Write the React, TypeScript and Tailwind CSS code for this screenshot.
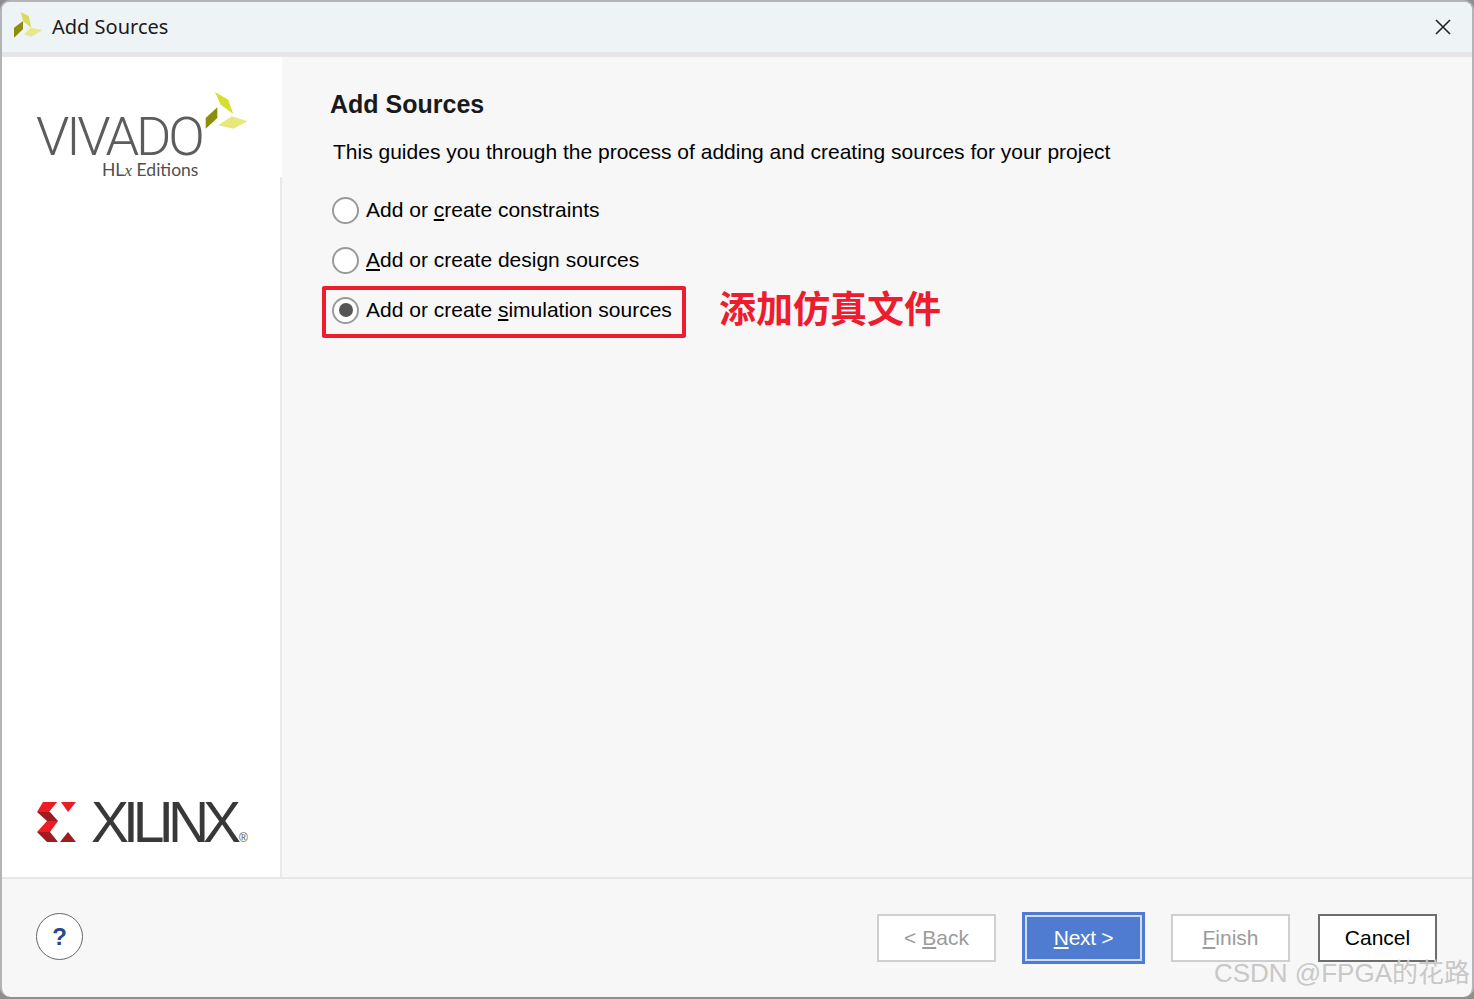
export default function App() {
  const sans = { fontFamily: '"Liberation Sans", Arial, sans-serif' };
  return (
    <div className="h-[999px] w-[1474px] overflow-hidden bg-[#8f8f8f] font-['Liberation_Sans',sans-serif]" >
      <div className="relative flex h-[997px] w-[1474px] flex-col overflow-hidden rounded-[10px] border-2 border-b-0 border-[#b4b4b4] bg-[#f7f7f7] text-black">
        {/* Title bar */}
        <div className="flex h-[50px] shrink-0 items-center bg-[#eef3f6]">
          <svg width="30" height="32" viewBox="0 0 30 32" className="ml-[12px]">
            <polygon points="6.7,1 14.7,5 17.3,16.7 9,10" fill="#d9dc5a" />
            <polygon points="9,10 9,18.3 0,26.7 0,16.7" fill="#8c8f0c" />
            <polygon points="10,23.3 16.7,16.7 28.3,19 17.3,25.7" fill="#e6e88c" />
          </svg>
          <span className="ml-[8px] text-[20px] font-['Noto_Sans','Liberation_Sans',sans-serif] text-[#1a1a1a]">Add Sources</span>
          <svg width="18" height="18" viewBox="0 0 18 18" className="ml-auto mr-[20px]" stroke="#222" strokeWidth="1.6">
            <path d="M2 2 L16 16 M16 2 L2 16" />
          </svg>
        </div>
        <div className="h-[5px] shrink-0 bg-[#e6e6e6]" />
        {/* Body */}
        <div className="flex min-h-0 flex-1">
          <aside className="flex w-[280px] shrink-0 flex-col border-r-2 border-[#e9e9e9] bg-white">
            <div className="relative h-[120px] shrink-0 w-[280px] bg-white">
              <span className="absolute left-[34px] top-[59px] text-[54px] leading-[42px] font-['Roboto',sans-serif] font-light tracking-[-3.2px] text-[#5c5c5c]">VIVADO</span>
              <span className="absolute left-[100px] top-[103px] text-[17.5px] leading-[20px] font-['Lato',sans-serif] text-[#4f4f4f]">
                HL<span className="font-['Liberation_Serif',serif] italic">x</span> Editions
              </span>
              <svg width="46" height="42" viewBox="0 0 46 42" className="absolute left-[201px] top-[33px]">
                <polygon points="12,2 25.3,9.7 30.3,24 17.7,14.7" fill="#d6de32" />
                <polygon points="14.3,17.3 14.3,28 2.7,38.7 2.7,28" fill="#8b8f08" />
                <polygon points="15.3,35.3 28.7,26.3 44.7,31.3 30.3,38.7" fill="#e6e97a" />
              </svg>
            </div>
            <div className="mt-auto mb-[33px] flex items-center pl-[35px]">
              <svg width="40" height="40" viewBox="0 0 40 40">
                <polygon points="6,0 20,0 12,10 0,10" fill="#ed1c24" />
                <polygon points="0,10 13,10 21,19 10,19" fill="#9e1b20" />
                <polygon points="10,19 21,19 13,30 0,30" fill="#ed1c24" />
                <polygon points="0,30 13,30 21,40 10,40" fill="#9e1b20" />
                <polygon points="24,0 39,0 31,10" fill="#ed1c24" />
                <polygon points="31,30 39,40 23,40" fill="#9e1b20" />
              </svg>
              <span className="ml-[14px] text-[57px] leading-[44px] font-normal tracking-[-6.1px] text-[#383838]">XILINX</span>
              <span className="ml-[4px] self-end text-[12px] leading-[12px] text-[#555]" style={sans}>®</span>
            </div>
          </aside>
          <main className="relative min-w-0 flex-1 pl-[49px] pt-[31px]">
            <h1 className="-ml-[1px] text-[25px] font-bold leading-[32px] text-[#1a1a1a]">Add Sources</h1>
            <p className="ml-[2px] mt-[18px] text-[21px] leading-[28px]">This guides you through the process of adding and creating sources for your project</p>
            <div className="mt-[19px] flex flex-col">
              <Option label={<>Add or <u>c</u>reate constraints</>} />
              <Option label={<><u>A</u>dd or create design sources</>} />
              <Option checked label={<>Add or create <u>s</u>imulation sources</>} />
            </div>
            <div className="absolute left-[40px] top-[229px] h-[52px] w-[364px] rounded-[2px] border-[4px] border-[#ed1c2e]" />
            <span className="absolute left-[437px] top-[226px] text-[37px] font-bold leading-[48px] text-[#ed1c2e] font-['Noto_Sans_CJK_SC',sans-serif]">添加仿真文件</span>
          </main>
        </div>
        {/* Footer */}
        <footer className="flex h-[120px] shrink-0 items-center border-t-2 border-[#e6e6e6] pl-[34px] pr-[35px]">
          <button className="-mt-[3px] flex h-[47px] w-[47px] items-center justify-center rounded-full border border-[#666] bg-white text-[24px] font-bold text-[#27498c]">?</button>
          <div className="ml-auto flex items-center">
            <FooterButton><span className="text-[#9b9b9b]">&lt; <u>B</u>ack</span></FooterButton>
            <button className="ml-[26px] flex h-[52px] w-[123px] items-center justify-center border-[3px] border-[#4f7cd0] bg-[#4f7cd0] text-[21px] tracking-[-0.3px] text-white outline outline-2 -outline-offset-[5px] outline-[#cfdcf3]">
              <span><u>N</u>ext &gt;</span>
            </button>
            <div className="ml-[26px]"><FooterButton><span className="text-[#9b9b9b]"><u>F</u>inish</span></FooterButton></div>
            <button className="ml-[28px] flex h-[48px] w-[119px] items-center justify-center border-2 border-[#6e6e6e] bg-white text-[21px] text-black">Cancel</button>
          </div>
        </footer>
        <span className="pointer-events-none absolute bottom-[6px] right-[2px] text-[26px] leading-[36px] text-[#c8c8c8] font-['Liberation_Sans','Noto_Sans_CJK_SC',sans-serif]">CSDN @FPGA的花路</span>
      </div>
    </div>
  );
}

function Option({ label, checked }: { label: React.ReactNode; checked?: boolean }) {
  return (
    <div className="flex h-[50px] items-center">
      <span className="ml-[1px] flex h-[27px] w-[27px] shrink-0 items-center justify-center rounded-full border-2 border-[#9a9a9a] bg-white">
        {checked && <span className="h-[14px] w-[14px] rounded-full bg-[#555]" />}
      </span>
      <span className="ml-[7px] text-[21px] leading-[28px]">{label}</span>
    </div>
  );
}

function FooterButton({ children }: { children: React.ReactNode }) {
  return (
    <button className="flex h-[48px] w-[119px] items-center justify-center border-2 border-[#cfcfcf] bg-white text-[21px]">
      {children}
    </button>
  );
}
